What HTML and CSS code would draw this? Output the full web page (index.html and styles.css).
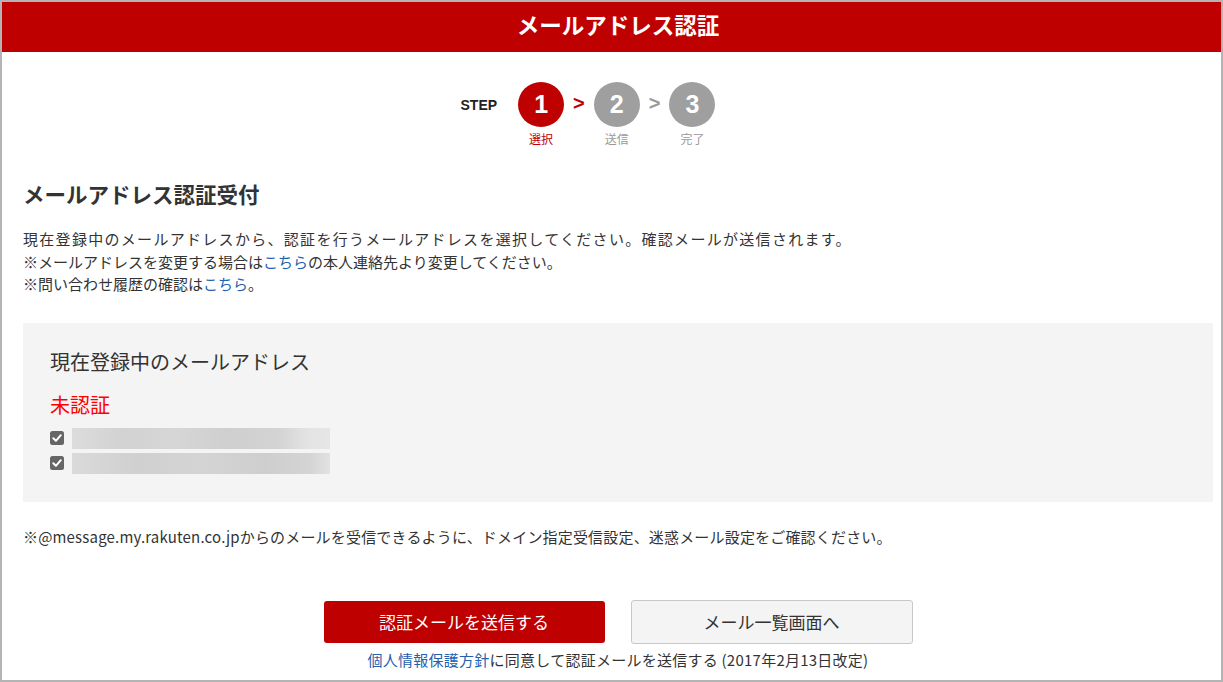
FILE: index.html
```html
<!DOCTYPE html>
<html lang="ja">
<head>
<meta charset="utf-8">
<title>メールアドレス認証</title>
<link rel="stylesheet" href="styles.css">
</head>
<body>
<div class="frame">
  <header class="header"><h1 class="header-title">メールアドレス認証</h1></header>
  <main class="content">
    <div class="steps">
      <div class="step-label-box"><span class="step-label">STEP</span></div>
      <div class="step">
        <div class="circle circle-active">1</div>
        <div class="step-name step-name-active">選択</div>
      </div>
      <div class="arrow-box"><span class="arrow arrow-active">&gt;</span></div>
      <div class="step">
        <div class="circle">2</div>
        <div class="step-name">送信</div>
      </div>
      <div class="arrow-box"><span class="arrow">&gt;</span></div>
      <div class="step">
        <div class="circle">3</div>
        <div class="step-name">完了</div>
      </div>
    </div>

    <h2 class="page-title">メールアドレス認証受付</h2>
    <p class="intro"><span class="intro-lead">現在登録中のメールアドレスから、認証を行うメールアドレスを選択してください。確認メールが送信されます。</span><br>※メールアドレスを変更する場合は<a class="link" href="#">こちら</a>の本人連絡先より変更してください。<br>※問い合わせ履歴の確認は<a class="link" href="#">こちら</a>。</p>

    <section class="mail-box">
      <h3 class="mail-box-title">現在登録中のメールアドレス</h3>
      <div class="unverified">未認証</div>
      <div class="mail-rows">
        <label class="mail-row">
          <svg class="check" width="14" height="14" viewBox="0 0 14 14"><rect x="0" y="0" width="14" height="14" rx="2.5" fill="#666"/><path d="M3.3 7.2 L5.9 9.8 L10.8 4.2" fill="none" stroke="#fff" stroke-width="2" stroke-linecap="round" stroke-linejoin="round"/></svg>
          <span class="blur-bar bar-a"></span>
        </label>
        <label class="mail-row">
          <svg class="check" width="14" height="14" viewBox="0 0 14 14"><rect x="0" y="0" width="14" height="14" rx="2.5" fill="#666"/><path d="M3.3 7.2 L5.9 9.8 L10.8 4.2" fill="none" stroke="#fff" stroke-width="2" stroke-linecap="round" stroke-linejoin="round"/></svg>
          <span class="blur-bar bar-b"></span>
        </label>
      </div>
    </section>

    <p class="notice">※@message.my.rakuten.co.jpからのメールを受信できるように、ドメイン指定受信設定、迷惑メール設定をご確認ください。</p>

    <div class="actions">
      <button class="btn btn-primary" type="button">認証メールを送信する</button>
      <button class="btn btn-secondary" type="button">メール一覧画面へ</button>
    </div>
    <p class="agree"><a class="link" href="#">個人情報保護方針</a>に同意して認証メールを送信する (2017年2月13日改定)</p>
  </main>
</div>
</body>
</html>
```
FILE: styles.css
```css
* { box-sizing: border-box; }
html, body { margin: 0; padding: 0; background: #fff; }
body {
  font-family: "Noto Sans CJK JP", "Noto Sans", sans-serif;
  color: #333;
}
.frame {
  width: 1223px;
  height: 682px;
  border: 2px solid #b4b4b4;
  overflow: hidden;
  background: #fff;
}
.header {
  background: #bf0000;
  height: 50px;
  padding: 0 8px 0 21px;
}
.header-title {
  margin: 0;
  color: #fff;
  font-size: 22.5px;
  font-weight: 700;
  line-height: 44px;
  text-align: center;
}
.content {
  padding: 0 8px 0 21px;
}
.steps {
  display: flex;
  justify-content: center;
  align-items: flex-start;
  padding-top: 30px;
  margin-left: -60px;
}
.step-label-box, .arrow-box {
  height: 45px;
  display: flex;
  align-items: center;
}
.step-label {
  font-family: "Liberation Sans", Arial, sans-serif;
  font-weight: 700;
  font-size: 14px;
  color: #222;
  margin-right: 21px;
}
.arrow-box { padding: 0 9px 0 9px; }
.arrow {
  font-family: "Liberation Sans", Arial, sans-serif;
  font-weight: 700;
  font-size: 20px;
  color: #999;
  line-height: 1;
  margin-top: -3px;
}
.arrow-active { color: #bf0000; }
.step {
  display: flex;
  flex-direction: column;
  align-items: center;
}
.circle {
  width: 46px;
  height: 45px;
  border-radius: 50%;
  background: #9f9f9f;
  color: #fff;
  font-family: "Liberation Sans", Arial, sans-serif;
  font-weight: 700;
  font-size: 25px;
  display: flex;
  align-items: center;
  justify-content: center;
}
.circle-active { background: #bf0000; }
.step-name {
  margin-top: 4px;
  font-size: 12px;
  line-height: 16px;
  color: #999;
}
.step-name-active { color: #bf0000; }
.page-title {
  margin: 32px 0 0;
  font-size: 21.5px;
  font-weight: 700;
  line-height: 30px;
  color: #333;
}
.intro {
  margin: 19px 0 0;
  font-size: 15px;
  line-height: 22.5px;
}
.intro-lead { letter-spacing: 1.3px; }
.link { color: #2460b0; text-decoration: none; }
.mail-box {
  margin-top: 27px;
  background: #f4f4f4;
  padding: 24px 27px 28px;
  height: 179px;
}
.mail-box-title {
  margin: 0;
  font-size: 20px;
  font-weight: 400;
  line-height: 30px;
  color: #333;
}
.unverified {
  margin-top: 13px;
  font-size: 20px;
  line-height: 30px;
  color: #f00;
}
.mail-rows {
  margin-top: 8px;
  display: flex;
  flex-direction: column;
  gap: 4px;
}
.mail-row {
  display: flex;
  align-items: center;
  gap: 8px;
}
.check { flex: none; }
.blur-bar {
  display: block;
  width: 258px;
  height: 21px;
  background: #dedede;
}
.bar-a {
  background: linear-gradient(90deg, #dcdcdc 0%, #d2d2d2 20%, #d6d6d6 40%, #cfcfcf 60%, #d3d3d3 80%, #e4e4e4 92%, #e6e6e6 100%);
}
.bar-b {
  background: linear-gradient(90deg, #dadada 0%, #d0d0d0 25%, #d4d4d4 50%, #cecece 75%, #d4d4d4 92%, #e2e2e2 100%);
}
.notice {
  margin: 24px 0 0;
  font-size: 15px;
  line-height: 22px;
  letter-spacing: 0.18px;
}
.actions {
  margin-top: 52px;
  display: flex;
  justify-content: center;
  align-items: center;
  gap: 26px;
}
.btn {
  font-family: "Noto Sans CJK JP", "Noto Sans", sans-serif;
  font-size: 17px;
  border-radius: 3px;
  cursor: pointer;
}
.btn-primary {
  width: 281px;
  height: 42px;
  background: #bf0000;
  color: #fff;
  border: 0;
}
.btn-secondary {
  width: 282px;
  height: 44px;
  background: #f4f4f4;
  color: #333;
  border: 1px solid #c8c8c8;
}
.agree {
  margin: 5px 0 0;
  text-align: center;
  font-size: 15px;
  line-height: 22px;
  letter-spacing: 0.25px;
}
```
